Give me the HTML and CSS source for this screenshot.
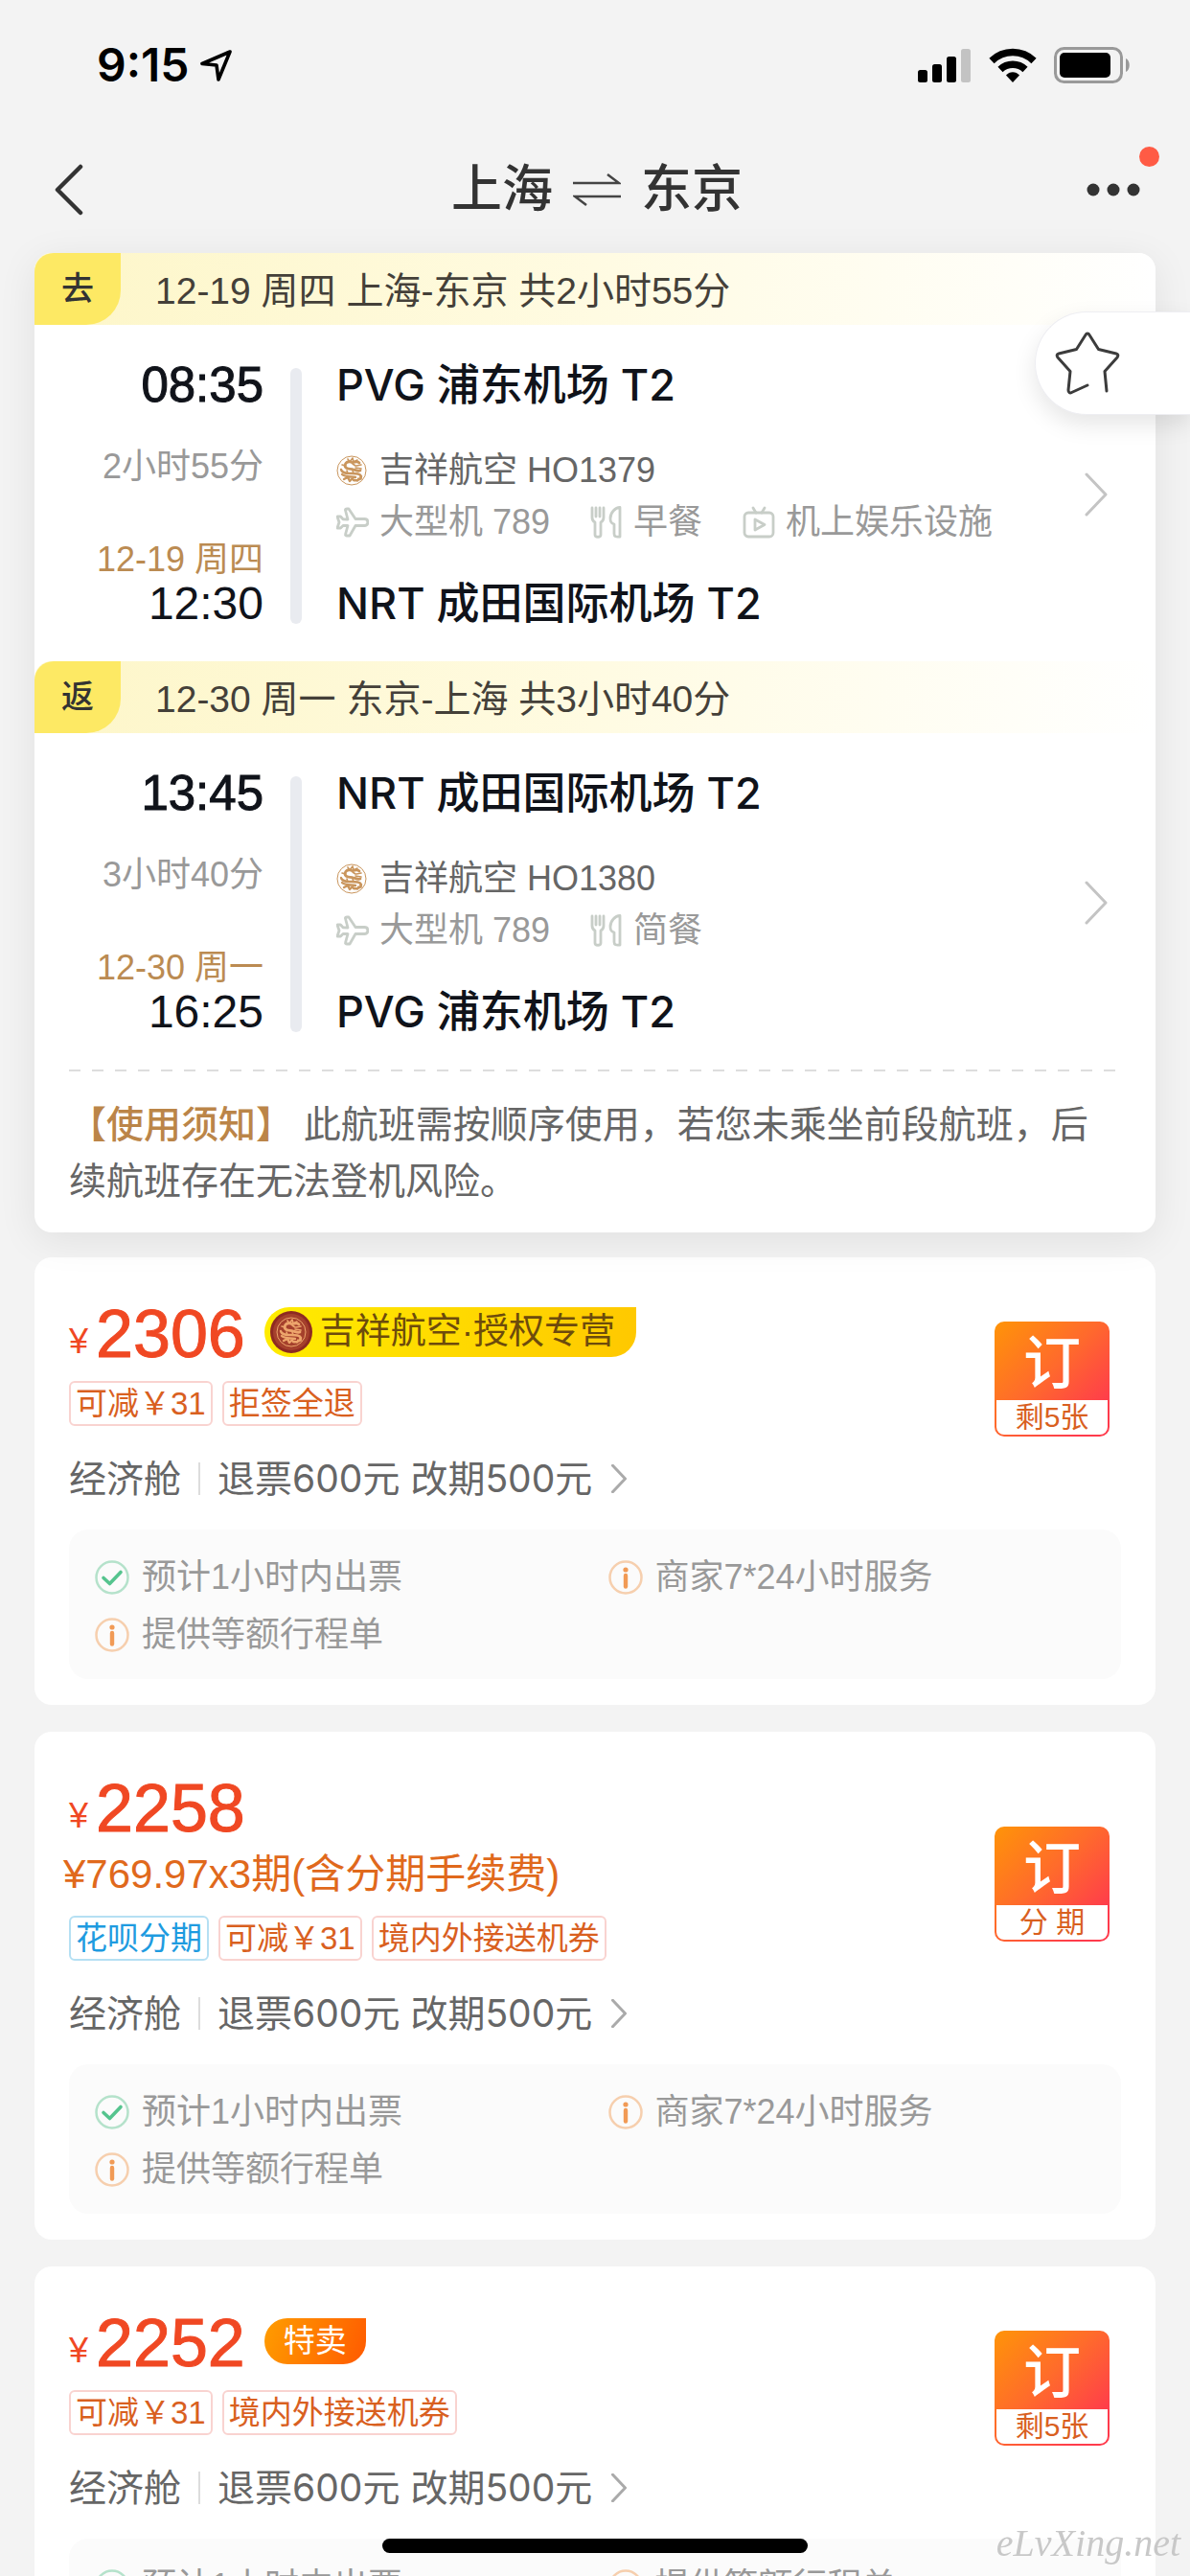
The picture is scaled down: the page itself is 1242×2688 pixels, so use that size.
FILE: index.html
```html
<!DOCTYPE html>
<html lang="zh-CN">
<head>
<meta charset="utf-8">
<meta name="viewport" content="width=device-width, initial-scale=1">
<title>上海 ⇌ 东京</title>
<link rel="stylesheet" href="styles.css">
</head>
<body>
<svg class="sprite" aria-hidden="true">
  <symbol id="i-dragon" viewBox="0 0 32 32">
    <circle cx="16" cy="16" r="15" fill="none" stroke="currentColor" stroke-width="1"/>
    <g fill="none" stroke="currentColor" stroke-linecap="round" stroke-linejoin="round">
      <path stroke-width="2.8" d="M24 8c-3-3-6 1-9-1-3-1-6 1-6 4 0 4 5 3 9 4 3 1 5 2 7 1"/>
      <path stroke-width="2.4" d="M5 15c1 4 6 4 11 4 5 0 9 0 10 3 0 3-4 5-8 4M6 20c3 3 9 2 14 3M8 25l4-2 2 4 3-3"/>
      <path stroke-width="1.6" d="M12 4l2 3 3-4 1 4 4-2M6 10l4 1M21 11l5-1M20 13l6 1M17 9l3 2M11 16l1 3M17 16l1 3M22 27l1-3M26 25l-1-3"/>
    </g>
  </symbol>
  <symbol id="i-plane" viewBox="0 0 34 30">
    <path fill="none" stroke="currentColor" stroke-width="2.8" stroke-linejoin="round" d="M12 12L9.500 2.500C9.200 1.500 10 1 11 1h2l7 10.500h9.500c4.500 0 4.500 7 0 7H20L14 29h-3c-1 0-1.700-.6-1.400-1.600L12 18.500H7L4.500 21H1l2-6-2-6h3.500L7 11.800z"/>
  </symbol>
  <symbol id="i-meal" viewBox="0 0 34 34">
    <g fill="none" stroke="currentColor" stroke-width="2.800" stroke-linejoin="round" stroke-linecap="round">
      <path d="M2 2v10c0 3 1 4 3 5v13c0 3 6 3 6 0V17c2-1 3-2 3-5V2M6 2v9M10 2v9"/>
      <path d="M31 32V1.500C26 1.500 21 7 21 13c0 4 1 5 4 6v10c0 3 2 3.500 6 3z"/>
    </g>
  </symbol>
  <symbol id="i-tv" viewBox="0 0 34 34">
    <g fill="none" stroke="currentColor" stroke-width="2.800" stroke-linejoin="round" stroke-linecap="round">
      <rect x="2" y="7" width="30" height="25" rx="4"/>
      <path d="M11 2l3 5M23 2l-3 5M13 14v11l10-5.500z"/>
    </g>
  </symbol>
  <symbol id="i-chev" viewBox="0 0 24 46">
    <path fill="none" stroke="currentColor" stroke-width="3" stroke-linecap="round" stroke-linejoin="round" vector-effect="non-scaling-stroke" d="M2 2l20 21L2 44"/>
  </symbol>
  <symbol id="i-ok" viewBox="0 0 36 36">
    <circle cx="18" cy="18" r="16.500" fill="none" stroke="#b5e2cb" stroke-width="2.500"/>
    <path fill="none" stroke="#55c48e" stroke-width="3.600" stroke-linecap="round" stroke-linejoin="round" d="M9 18.500l6.500 6L27 12.500"/>
  </symbol>
  <symbol id="i-info" viewBox="0 0 36 36">
    <circle cx="18" cy="18" r="16.500" fill="none" stroke="#f6cfae" stroke-width="2.500"/>
    <circle cx="18" cy="10" r="2.600" fill="#f19a55"/>
    <path stroke="#f19a55" stroke-width="4.400" stroke-linecap="round" d="M18 16v11.500"/>
  </symbol>
</svg>

<div class="status">
  <div class="status-time">9:15
    <svg width="33" height="33" viewBox="0 0 33 33"><path fill="none" stroke="#000" stroke-width="3.600" stroke-linejoin="round" d="M31 2L2 14.500l15 1.500 2 15z"/></svg>
  </div>
  <div class="status-icons">
    <svg width="56" height="36" viewBox="0 0 56 36"><rect y="23" width="10" height="13" rx="2.500"/><rect x="15" y="17" width="10" height="19" rx="2.500"/><rect x="30" y="9" width="10" height="27" rx="2.500"/><rect x="45" y="1" width="10" height="35" rx="2.500" fill="#c3c3c3"/></svg>
    <svg width="50" height="36" viewBox="0 0 50 36"><g fill="none" stroke="#000" stroke-width="7.500"><path d="M3 13.500a31.500 31.500 0 0 1 44 0"/><path d="M12 22.500a19 19 0 0 1 26 0"/></g><path d="M25 36l-7-7.500c3.500-4.500 10.500-4.500 14 0z"/></svg>
    <svg width="80" height="38" viewBox="0 0 80 38"><rect x="1.500" y="1.500" width="69" height="35" rx="9" fill="none" stroke="#999" stroke-width="3"/><rect x="6" y="6" width="53" height="26" rx="5"/><path fill="#999" d="M75 12c5 2 5 12 0 14z"/></svg>
  </div>
</div>

<header class="nav">
  <button class="nav-back" aria-label="返回"><svg width="32" height="54" viewBox="0 0 32 54"><path fill="none" stroke="#333" stroke-width="4.500" stroke-linecap="round" stroke-linejoin="round" d="M28 3L4 27l24 24"/></svg></button>
  <h1 class="nav-title">上海
    <svg width="50" height="34" viewBox="0 0 50 34"><path fill="none" stroke="#444" stroke-width="2.500" d="M0 10h48L36 1M50 24H2l12 9"/></svg>
    东京</h1>
  <button class="nav-more" aria-label="更多">
    <svg width="56" height="14" viewBox="0 0 56 14" fill="#333"><circle cx="7" cy="7" r="6.500"/><circle cx="28" cy="7" r="6.500"/><circle cx="49" cy="7" r="6.500"/></svg>
    <span class="nav-dot"></span>
  </button>
</header>

<main class="list">
  <section class="trip">
    <div class="band"><b class="band-tag">去</b><span class="band-text">12-19 周四 上海-东京 共2小时55分</span></div>
    <a class="leg" href="#go">
      <div class="times"><span class="clock medium">08:35</span><span class="duration">2小时55分</span><span class="date">12-19 周四</span><span class="clock">12:30</span></div>
      <div class="rail"></div>
      <div class="route">
        <span class="airport">PVG 浦东机场 T2</span>
        <span class="carrier"><svg class="seal"><use href="#i-dragon"/></svg>吉祥航空 HO1379</span>
        <span class="amenities">
          <span><svg><use href="#i-plane"/></svg>大型机 789</span>
          <span><svg><use href="#i-meal"/></svg>早餐</span>
          <span><svg><use href="#i-tv"/></svg>机上娱乐设施</span>
        </span>
        <span class="airport">NRT 成田国际机场 T2</span>
      </div>
      <svg class="leg-chev"><use href="#i-chev"/></svg>
    </a>
    <div class="band"><b class="band-tag">返</b><span class="band-text">12-30 周一 东京-上海 共3小时40分</span></div>
    <a class="leg" href="#back">
      <div class="times"><span class="clock medium">13:45</span><span class="duration">3小时40分</span><span class="date">12-30 周一</span><span class="clock">16:25</span></div>
      <div class="rail"></div>
      <div class="route">
        <span class="airport">NRT 成田国际机场 T2</span>
        <span class="carrier"><svg class="seal"><use href="#i-dragon"/></svg>吉祥航空 HO1380</span>
        <span class="amenities">
          <span><svg><use href="#i-plane"/></svg>大型机 789</span>
          <span><svg><use href="#i-meal"/></svg>简餐</span>
        </span>
        <span class="airport">PVG 浦东机场 T2</span>
      </div>
      <svg class="leg-chev"><use href="#i-chev"/></svg>
    </a>
    <p class="notice"><b>【使用须知】</b> 此航班需按顺序使用，若您未乘坐前段航班，后续航班存在无法登机风险。</p>
  </section>

  <article class="fare">
    <div class="fare-head">
      <div class="fare-main">
        <div class="price"><span class="yen">¥</span><span class="amount">2306</span>
          <span class="shop"><svg viewBox="0 0 44 44"><circle cx="22" cy="22" r="22" fill="#8e2a22"/><circle cx="22" cy="22" r="19" fill="#a5402c"/><svg x="6" y="6" width="32" height="32" color="#eda56c"><use href="#i-dragon"/></svg></svg>吉祥航空·授权专营</span></div>
        <div class="tags"><span class="tag">可减￥31</span><span class="tag">拒签全退</span></div>
        <a class="rules" href="#rules1"><span>经济舱</span><i></i><span>退票600元 改期500元</span><svg><use href="#i-chev"/></svg></a>
      </div>
      <button class="book"><span class="book-main">订</span><span class="book-sub">剩5张</span></button>
    </div>
    <ul class="perks">
      <li><svg><use href="#i-ok"/></svg>预计1小时内出票</li>
      <li><svg><use href="#i-info"/></svg>商家7*24小时服务</li>
      <li><svg><use href="#i-info"/></svg>提供等额行程单</li>
    </ul>
  </article>

  <article class="fare">
    <div class="fare-head">
      <div class="fare-main">
        <div class="price"><span class="yen">¥</span><span class="amount">2258</span></div>
        <div class="instalment">¥769.97x3期(含分期手续费)</div>
        <div class="tags"><span class="tag blue">花呗分期</span><span class="tag">可减￥31</span><span class="tag">境内外接送机券</span></div>
        <a class="rules" href="#rules2"><span>经济舱</span><i></i><span>退票600元 改期500元</span><svg><use href="#i-chev"/></svg></a>
      </div>
      <button class="book"><span class="book-main">订</span><span class="book-sub">分 期</span></button>
    </div>
    <ul class="perks">
      <li><svg><use href="#i-ok"/></svg>预计1小时内出票</li>
      <li><svg><use href="#i-info"/></svg>商家7*24小时服务</li>
      <li><svg><use href="#i-info"/></svg>提供等额行程单</li>
    </ul>
  </article>

  <article class="fare">
    <div class="fare-head">
      <div class="fare-main">
        <div class="price"><span class="yen">¥</span><span class="amount">2252</span><span class="sale">特卖</span></div>
        <div class="tags"><span class="tag">可减￥31</span><span class="tag">境内外接送机券</span></div>
        <a class="rules" href="#rules3"><span>经济舱</span><i></i><span>退票600元 改期500元</span><svg><use href="#i-chev"/></svg></a>
      </div>
      <button class="book"><span class="book-main">订</span><span class="book-sub">剩5张</span></button>
    </div>
    <ul class="perks">
      <li><svg><use href="#i-ok"/></svg>预计1小时内出票</li>
      <li><svg><use href="#i-info"/></svg>提供等额行程单</li>
    </ul>
  </article>
</main>

<button class="favourite" aria-label="收藏"><svg width="68" height="66" viewBox="0 0 68 66"><path fill="none" stroke="#3c3c3c" stroke-width="3" stroke-linecap="round" stroke-linejoin="round" d="M54 62l-2-20.500 13-14.500c1.500-2 1-3.500-1-4l-18.500-4.500L36 3.500c-1-2-3-2-4 0l-9.500 15L4 23c-2 .5-2.500 2-1 4l13 14.500L14 61c0 2.500 1.500 3.500 3.500 2.500L34 56"/></svg></button>
<div class="watermark">eLvXing.net</div>
<div class="home-bar"></div>
</body>
</html>
```
FILE: styles.css
```css
* { box-sizing: border-box; }

body {
  margin: 0;
  height: 100vh;
  display: flex;
  flex-direction: column;
  overflow: hidden;
  background: #f3f3f3;
  color: #333;
  font-family: "Liberation Sans", "Noto Sans CJK SC", sans-serif;
}

button { border: 0; padding: 0; background: none; font: inherit; cursor: pointer; }
a { color: inherit; text-decoration: none; }
svg { flex: none; display: block; }
.sprite { position: absolute; width: 0; height: 0; }

/* status bar */
.status {
  flex: none;
  height: 132px;
  padding: 4px 62px 0 101px;
  display: flex;
  align-items: center;
  justify-content: space-between;
}
.status-time {
  display: flex;
  align-items: center;
  gap: 11px;
  color: #000;
  font: 600 48px/56px Inter, sans-serif;
}
.status-icons { display: flex; align-items: center; gap: 18px; }

/* navigation bar */
.nav {
  flex: none;
  height: 132px;
  padding: 0 52px 0 56px;
  display: grid;
  grid-template-columns: 1fr auto 1fr;
  align-items: center;
}
.nav-back { justify-self: start; }
.nav-title {
  margin: 0;
  display: flex;
  align-items: center;
  gap: 21px;
  font-size: 53px;
  line-height: 64px;
  font-weight: 500;
}
.nav-more { justify-self: end; position: relative; }
.nav-dot {
  position: absolute;
  top: -38px;
  right: -20px;
  width: 21px;
  height: 21px;
  border-radius: 50%;
  background: #ff5b45;
}

/* itinerary */
.list {
  flex: 1;
  min-height: 0;
  padding: 0 36px;
}
.trip {
  position: relative;
  z-index: 1;
  margin-bottom: 26px;
  border-radius: 18px;
  background: #fff;
  box-shadow: 0 8px 40px rgba(0, 0, 0, .08);
}
.band {
  height: 75px;
  display: flex;
  align-items: center;
  gap: 36px;
  border-radius: 18px 18px 0 0;
  background: linear-gradient(90deg, #fdf6c8, #fffbe2 50%, #fff);
  color: #444039;
  font-size: 39px;
  line-height: 56px;
}
.band-text { padding-top: 4px; }
.band-tag {
  width: 90px;
  border-radius: 20px 0 36px 0;
  background: #fde964;
  color: #333;
  font-size: 34px;
  line-height: 75px;
  font-weight: 500;
  text-align: center;
}
.leg { display: flex; padding: 39px 50px 36px 0; }
.times {
  width: 239px;
  display: flex;
  flex-direction: column;
  text-align: right;
}
.clock { color: #10131a; font-size: 48px; line-height: 48px; }
.clock.medium { font-size: 51px; -webkit-text-stroke: 1px; }
.duration { margin: 39px 0 53px; color: #999; font-size: 36px; line-height: 44px; }
.date { color: #bb8b52; font-size: 36px; line-height: 44px; }
.rail {
  width: 12px;
  margin: 6px 36px 3px 28px;
  border-radius: 6px;
  background: #e9ebf0;
}
.route { flex: 1; display: flex; flex-direction: column; }
.airport {
  color: #10131a;
  font: 500 45px/48px Inter, "Noto Sans CJK SC", sans-serif;
}
.carrier {
  margin-top: 38px;
  display: flex;
  align-items: center;
  gap: 13px;
  color: #666;
  font-size: 36px;
  line-height: 54px;
}
.carrier .seal { width: 32px; height: 32px; color: #c9955c; }
.amenities {
  margin-bottom: 34px;
  display: flex;
  gap: 42px;
  color: #999;
  font-size: 36px;
  line-height: 54px;
}
.amenities span { display: flex; align-items: center; gap: 11px; }
.amenities svg { width: 34px; height: 34px; color: #c8cec8; }
.leg-chev { align-self: center; width: 24px; height: 46px; color: #c4c4c4; }
.notice {
  margin: 0 36px;
  padding: 28px 0 24px;
  background: repeating-linear-gradient(90deg, #ddd 0 12px, transparent 12px 24px) top / 100% 2px no-repeat;
  color: #666;
  font-size: 39px;
  line-height: 59px;
}
.notice b { color: #bb8548; font-weight: 500; }

/* fares */
.fare {
  margin-bottom: 28px;
  padding: 0 36px 27px;
  border-radius: 18px;
  background: #fff;
}
.fare-head { display: flex; align-items: center; padding: 0 12px 30px 0; }
.fare-main { flex: 1; padding-top: 52px; }
.price { display: flex; align-items: center; height: 52px; color: #f04823; }
.yen { align-self: flex-end; font-size: 36px; line-height: 32px; }
.amount {
  padding-top: 4px;
  margin: 0 20px 0 8px;
  font-size: 70px;
  line-height: 52px;
  -webkit-text-stroke: 1px;
}
.shop {
  display: flex;
  align-items: center;
  gap: 8px;
  padding: 0 22px 0 6px;
  border-radius: 26px 0 26px 26px;
  background: linear-gradient(100deg, #ffec00, #ffc800);
  color: #6d4b0c;
  font-size: 37px;
  line-height: 52px;
}
.shop > svg { width: 44px; height: 44px; }
.sale {
  padding: 0 20px;
  border-radius: 26px 0 26px 26px;
  background: linear-gradient(110deg, #ff9d00, #ff5a00);
  color: #fff;
  font-size: 33px;
  line-height: 48px;
}
.instalment {
  margin: 21px 0 -6px -6px;
  color: #e0691c;
  font-size: 42px;
  line-height: 48px;
}
.tags { display: flex; gap: 10px; margin-top: 25px; }
.tag {
  padding: 0 5px;
  border: 2px solid #f9d3d0;
  border-radius: 6px;
  color: #d9601f;
  font-size: 33px;
  line-height: 43px;
}
.tag.blue { border-color: #b5e0f3; color: #1e9be0; }
.rules {
  display: flex;
  align-items: center;
  height: 56px;
  margin: 27px 0 -5px;
  color: #666;
  font: 400 39px/56px Inter, "Noto Sans CJK SC", sans-serif;
}
.rules i { width: 2px; height: 34px; margin: 0 18px; background: #ddd; }
.rules svg { width: 16px; height: 30px; margin-left: 20px; color: #aaa; }
.book {
  width: 120px;
  padding: 8px 2px 2px;
  display: flex;
  flex-direction: column;
  border-radius: 10px;
  background: linear-gradient(135deg, #ff9408, #ff6a2c 45%, #ff3b4c 85%);
}
.book-main { color: #fff; font-size: 60px; line-height: 74px; font-weight: 500; }
.book-sub {
  border-radius: 0 0 8px 8px;
  background: #fff;
  color: #d9601f;
  font-size: 30px;
  line-height: 36px;
}
.perks {
  list-style: none;
  margin: 0;
  padding: 20px 0 16px 27px;
  display: grid;
  grid-template-columns: 1fr 1fr;
  border-radius: 20px;
  background: #fbfbfb;
  color: #999;
  font-size: 36px;
  line-height: 60px;
}
.perks li { display: flex; align-items: center; gap: 13px; }
.perks svg { width: 36px; height: 36px; }

/* overlays */
.favourite {
  position: fixed;
  z-index: 2;
  top: 325px;
  right: 0;
  width: 162px;
  height: 108px;
  padding-left: 20px;
  border: 1px solid #eeeef2;
  border-right: 0;
  border-radius: 54px 0 0 54px;
  background: #fff;
  box-shadow: 0 10px 24px rgba(0, 0, 0, .1);
}
.watermark {
  position: fixed;
  z-index: 2;
  right: 10px;
  bottom: 10px;
  color: #c8c8c8;
  font: italic 40px/48px "Liberation Serif", serif;
}
.home-bar {
  position: fixed;
  z-index: 3;
  left: 50%;
  bottom: 24px;
  width: 444px;
  height: 15px;
  border-radius: 8px;
  background: #000;
  transform: translateX(-50%);
}
```
